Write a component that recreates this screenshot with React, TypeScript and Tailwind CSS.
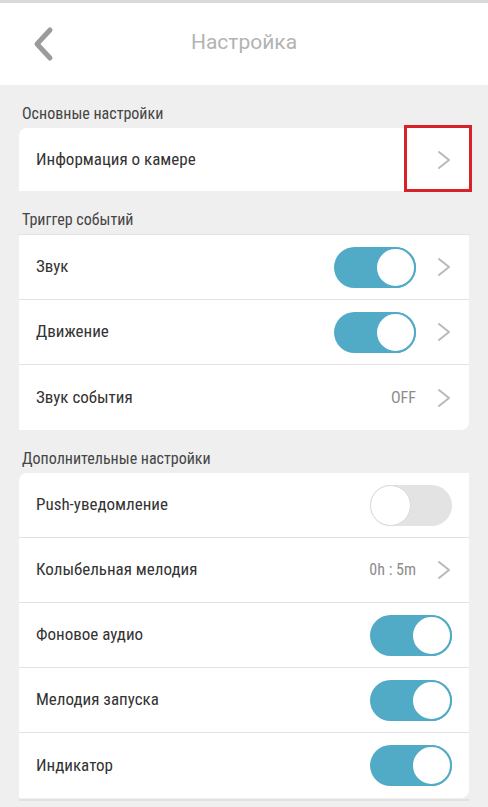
import React from "react";

type Row = {
  label: string;
  toggle?: boolean;
  on?: boolean;
  value?: string;
  chevron?: boolean;
};

const narrow = "'Roboto Condensed', 'Liberation Sans Narrow', 'DejaVu Sans Condensed', Roboto, sans-serif";

function Chevron() {
  return (
    <svg width="16" height="22" viewBox="0 0 16 22" className="shrink-0">
      <path d="M3 3 L13 11 L3 19" fill="none" stroke="#b9b9b9" strokeWidth="2" strokeLinecap="round" strokeLinejoin="round" />
    </svg>
  );
}

function Toggle({ on }: { on: boolean }) {
  return on ? (
    <div className="w-[82px] h-[41px] rounded-full bg-[#52abc6] flex items-center justify-end shrink-0">
      <div className="w-[41px] h-[41px] rounded-full bg-white border-2 border-[#52abc6]" />
    </div>
  ) : (
    <div className="w-[82px] h-[41px] rounded-full bg-[#e3e3e3] flex items-center justify-start shrink-0">
      <div className="w-[41px] h-[41px] rounded-full bg-white border border-[#d9d9d9]" />
    </div>
  );
}

function SectionLabel({ text }: { text: string }) {
  return (
    <div
      className="h-[43px] flex items-end pb-[5px] pl-[22px] text-[16px] leading-[18px] text-[#454545]"
      style={{ fontFamily: narrow }}
    >
      {text}
    </div>
  );
}

function RowItem({ row, last }: { row: Row; last: boolean }) {
  return (
    <div
      className={
        "h-[65px] flex items-center pl-[17px] pr-[17px] " +
        (last ? "" : "border-b border-[#e2e2e2]")
      }
    >
      <span className="flex-1 text-[17px] text-[#333]" style={{ fontFamily: narrow }}>
        {row.label}
      </span>
      {row.value && (
        <span className="text-[16px] text-[#8c8c8c]" style={{ fontFamily: narrow }}>
          {row.value}
        </span>
      )}
      {row.toggle && <Toggle on={!!row.on} />}
      {row.chevron && <div className="ml-[20px]"><Chevron /></div>}
    </div>
  );
}

const trigger: Row[] = [
  { label: "Звук", toggle: true, on: true, chevron: true },
  { label: "Движение", toggle: true, on: true, chevron: true },
  { label: "Звук события", value: "OFF", chevron: true },
];

const extra: Row[] = [
  { label: "Push-уведомление", toggle: true, on: false },
  { label: "Колыбельная мелодия", value: "0h : 5m", chevron: true },
  { label: "Фоновое аудио", toggle: true, on: true },
  { label: "Мелодия запуска", toggle: true, on: true },
  { label: "Индикатор", toggle: true, on: true },
];

export default function App() {
  return (
    <div
      className="w-[488px] h-[807px] overflow-hidden bg-[#efefef]"
      style={{ fontFamily: "Roboto, 'Noto Sans', sans-serif" }}
    >
      <header className="h-[85px] bg-white border-t-[3px] border-[#dadada] relative flex items-center justify-center">
        <svg width="30" height="40" viewBox="0 0 30 40" className="absolute left-[29px] top-[22px]">
          <path d="M21 5 L8 19 L21 33" fill="none" stroke="#9b9b9b" strokeWidth="5" strokeLinecap="round" strokeLinejoin="round" />
        </svg>
        <h1 className="text-[21px] text-[#b3b3b3] -mt-[3px]">Настройка</h1>
      </header>

      <SectionLabel text="Основные настройки" />
      <div className="relative mx-[19px] bg-white rounded-tl-lg rounded-br-lg h-[63px] flex items-center pl-[17px] pr-[17px]">
        <span className="flex-1 text-[17px] text-[#333]" style={{ fontFamily: narrow }}>
          Информация о камере
        </span>
        <Chevron />
        <div className="absolute right-[-3px] top-[-3px] w-[68px] h-[67px] border-[3px] border-[#d8222a]" />
      </div>

      <SectionLabel text="Триггер событий" />
      <div className="mx-[19px] bg-white rounded-br-lg border-t border-[#e2e2e2]">
        {trigger.map((r, i) => (
          <RowItem key={r.label} row={r} last={i === trigger.length - 1} />
        ))}
      </div>

      <SectionLabel text="Дополнительные настройки" />
      <div className="mx-[19px] bg-white rounded-tl-lg rounded-br-lg">
        {extra.map((r, i) => (
          <RowItem key={r.label} row={r} last={i === extra.length - 1} />
        ))}
      </div>
      <div className="mx-[19px] mt-[1px] h-[2px] bg-[#e2e2e2]" />
    </div>
  );
}
